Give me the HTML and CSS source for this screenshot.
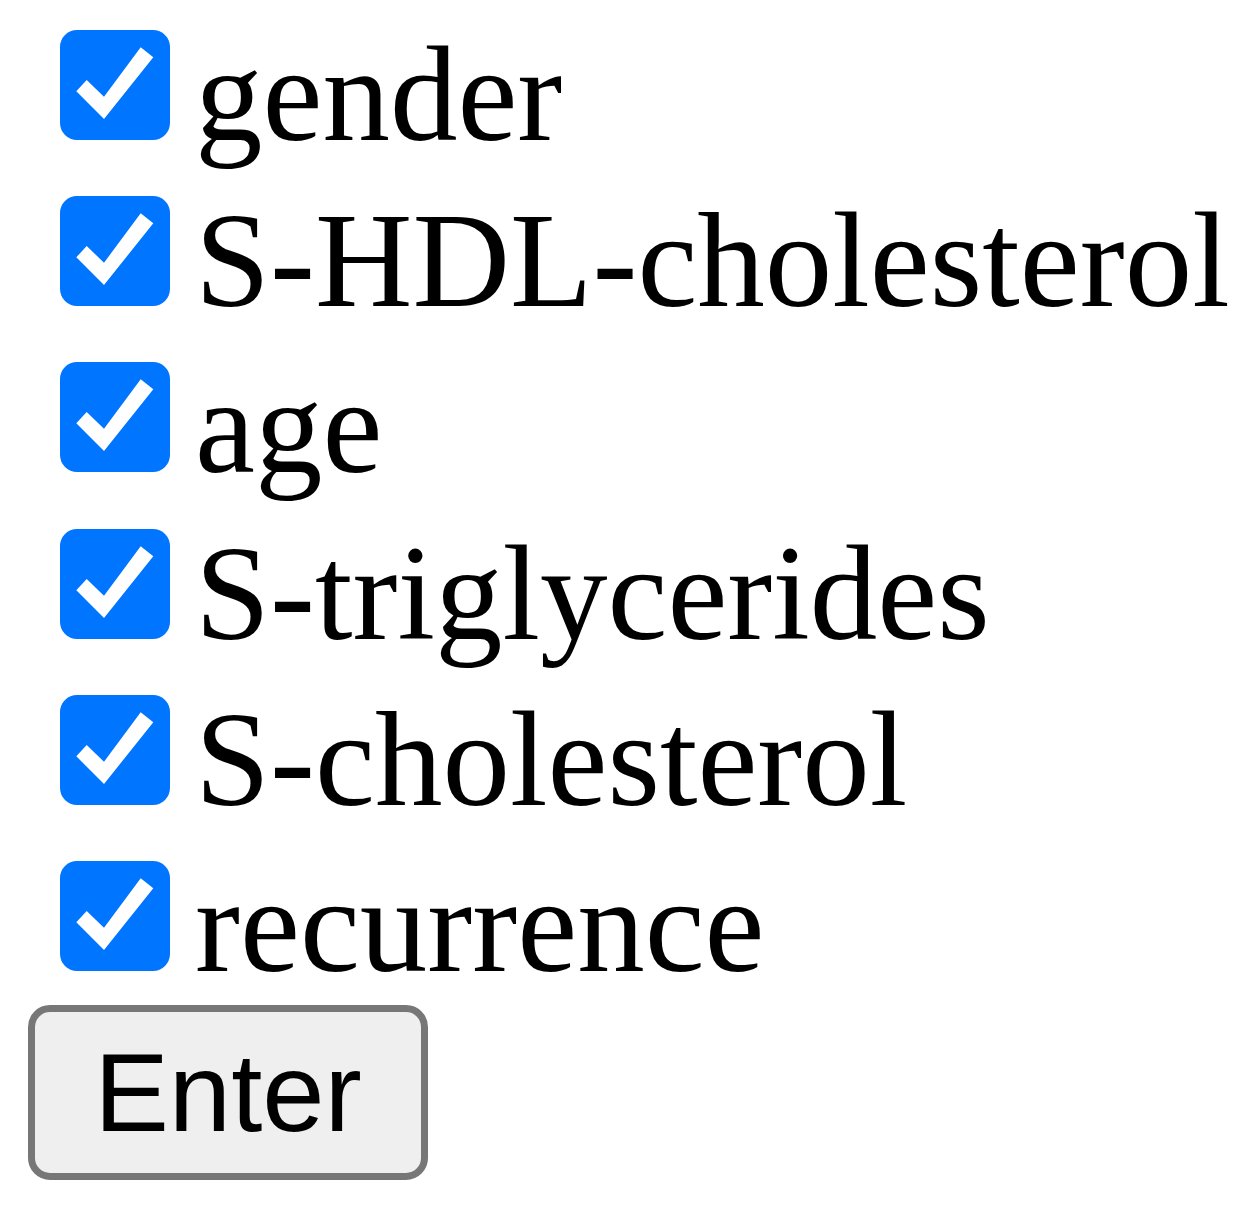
FILE: index.html
```html
<!DOCTYPE html>
<html lang="en">
<head>
<meta charset="utf-8">
<title>Variables</title>
<link rel="stylesheet" href="styles.css">
</head>
<body>
<form class="form">
  <div class="options">
    <label class="option"><span class="box"><svg viewBox="0 0 110 110"><polygon points="16.3,61.3 26.7,50 44,66.7 80.7,17.3 93.3,27.3 44,89" fill="#fff"/></svg></span><span class="text">gender</span></label>
    <label class="option"><span class="box"><svg viewBox="0 0 110 110"><polygon points="16.3,61.3 26.7,50 44,66.7 80.7,17.3 93.3,27.3 44,89" fill="#fff"/></svg></span><span class="text">S-HDL-cholesterol</span></label>
    <label class="option"><span class="box"><svg viewBox="0 0 110 110"><polygon points="16.3,61.3 26.7,50 44,66.7 80.7,17.3 93.3,27.3 44,89" fill="#fff"/></svg></span><span class="text">age</span></label>
    <label class="option"><span class="box"><svg viewBox="0 0 110 110"><polygon points="16.3,61.3 26.7,50 44,66.7 80.7,17.3 93.3,27.3 44,89" fill="#fff"/></svg></span><span class="text">S-triglycerides</span></label>
    <label class="option"><span class="box"><svg viewBox="0 0 110 110"><polygon points="16.3,61.3 26.7,50 44,66.7 80.7,17.3 93.3,27.3 44,89" fill="#fff"/></svg></span><span class="text">S-cholesterol</span></label>
    <label class="option"><span class="box"><svg viewBox="0 0 110 110"><polygon points="16.3,61.3 26.7,50 44,66.7 80.7,17.3 93.3,27.3 44,89" fill="#fff"/></svg></span><span class="text">recurrence</span></label>
  </div>
  <button type="button" class="enter">Enter</button>
</form>
</body>
</html>
```
FILE: styles.css
```css
html, body {
  margin: 0;
  padding: 0;
  background: #ffffff;
}

.form {
  display: flex;
  flex-direction: column;
  align-items: flex-start;
  padding: 21.5px 0 0 28px;
}

.options {
  display: flex;
  flex-direction: column;
  gap: 20.4px;
}

.option {
  display: flex;
  align-items: baseline;
  height: 146px;
}

.box {
  display: inline-block;
  width: 110px;
  height: 110px;
  margin: 0 25px 0 32px;
  background: #0075ff;
  border-radius: 17px;
}

.box svg {
  display: block;
  width: 110px;
  height: 110px;
}

.text {
  font-family: "Liberation Serif", "Times New Roman", serif;
  font-size: 135px;
  line-height: 146px;
  color: #000;
  white-space: nowrap;
}

.enter {
  margin-top: 5.5px;
  width: 400px;
  height: 175px;
  box-sizing: border-box;
  display: flex;
  align-items: center;
  justify-content: center;
  padding: 0;
  border: 7px solid #777777;
  border-radius: 22px;
  background: #efefef;
  font-family: "Liberation Sans", Arial, sans-serif;
  font-size: 112px;
  color: #000;
}
```
